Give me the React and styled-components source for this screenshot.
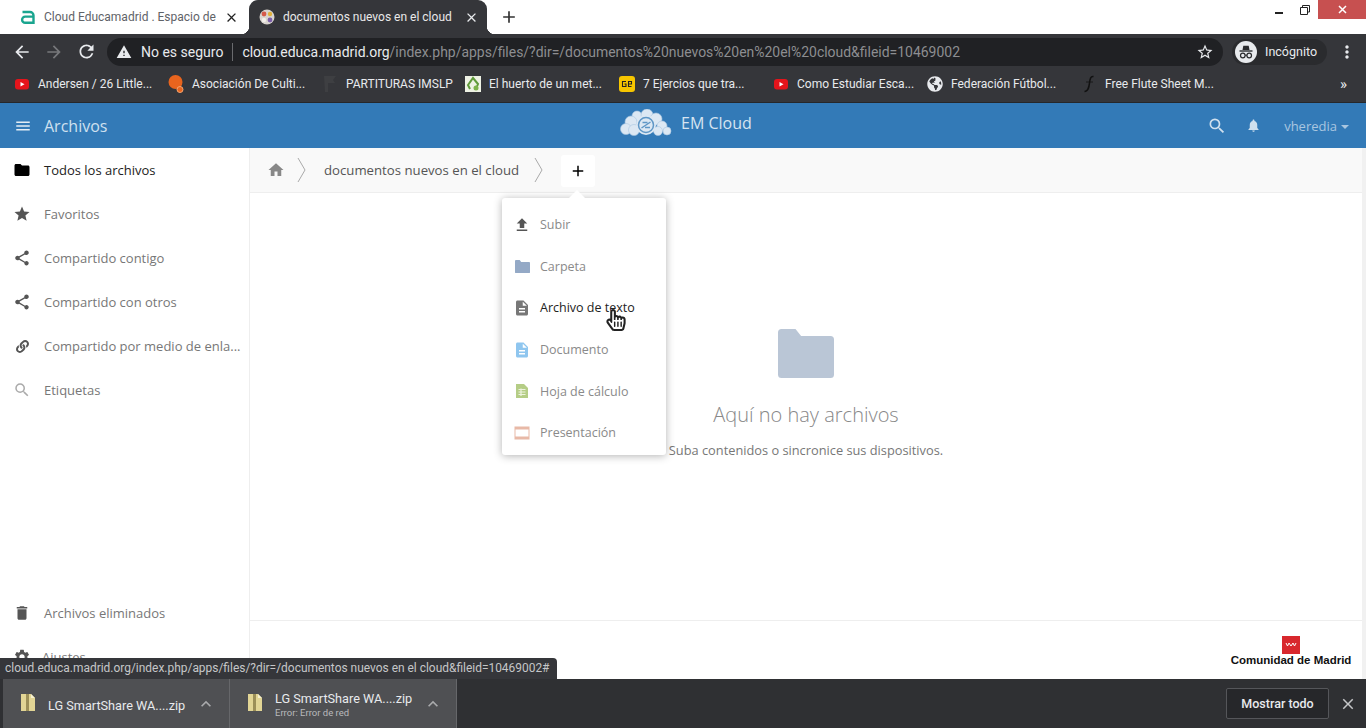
import React from "react";
import styled, { createGlobalStyle } from "styled-components";
import {
  MdMenu,
  MdFolder,
  MdStar,
  MdShare,
  MdSearch,
  MdDelete,
  MdSettings,
  MdHome,
  MdFileUpload,
  MdDescription,
  MdNotifications,
  MdArrowBack,
  MdArrowForward,
  MdRefresh,
  MdWarning,
  MdStarBorder,
  MdClose,
  MdAdd,
  MdExpandLess,
  MdMoreVert,
} from "react-icons/md";
import { FaGlobeAmericas, FaHandPointer, FaRegHandPointer, FaLink } from "react-icons/fa";

const Global = createGlobalStyle`
  html, body { margin: 0; padding: 0; background: #fff; overflow: hidden; }
  * { box-sizing: border-box; }
`;

const Page = styled.div`
  position: relative;
  width: 1366px;
  height: 728px;
  display: flex;
  flex-direction: column;
  overflow: hidden;
  font-family: "Open Sans", "Liberation Sans", sans-serif;
`;

/* browser chrome */
const TabStrip = styled.div`
  height: 34px;
  background: #fff;
  display: flex;
  align-items: stretch;
  font-family: Roboto, "Liberation Sans", sans-serif;
`;

const Tab = styled.div`
  position: relative;
  width: ${(p) => (p.$active ? "238px" : "249px")};
  padding: ${(p) => (p.$active ? "0 8px 0 10px" : "0 10px 0 20px")};
  display: flex;
  align-items: center;
  gap: 8px;
  font-size: 12px;
  border-radius: 9px 9px 0 0;
  background: ${(p) => (p.$active ? "#35363a" : "#fff")};
  color: ${(p) => (p.$active ? "#e8e8e8" : "#5f6368")};
  svg { flex: none; }
  ${(p) =>
    p.$active &&
    `
    &::before, &::after {
      content: "";
      position: absolute;
      bottom: 0;
      width: 8px;
      height: 8px;
    }
    &::before {
      left: -8px;
      background: radial-gradient(circle at 0 0, #fff 8px, #35363a 8.5px);
    }
    &::after {
      right: -8px;
      background: radial-gradient(circle at 100% 0, #fff 8px, #35363a 8.5px);
    }
  `}
`;

const TabTitle = styled.span`
  flex: 1;
  white-space: nowrap;
  overflow: hidden;
`;

const NewTab = styled.div`
  width: 44px;
  display: flex;
  align-items: center;
  justify-content: center;
  color: #333;
`;

const WindowControls = styled.div`
  margin-left: auto;
  display: flex;
  align-items: flex-start;
  color: #222;
`;

const WinButton = styled.div`
  width: ${(p) => (p.$close ? "48px" : "26px")};
  height: 19px;
  display: flex;
  align-items: center;
  justify-content: center;
  background: ${(p) => (p.$close ? "#c75050" : "transparent")};
  color: ${(p) => (p.$close ? "#fff" : "#222")};
`;

const Toolbar = styled.div`
  height: 35px;
  background: #35363a;
  display: flex;
  align-items: center;
  padding: 0 9px 0 6px;
  color: #e8eaed;
  font-family: Roboto, "Liberation Sans", sans-serif;
`;

const NavButton = styled.div`
  width: 32px;
  display: flex;
  justify-content: center;
  color: ${(p) => (p.$off ? "#77787b" : "#e8eaed")};
`;

const Omnibox = styled.div`
  width: 1116px;
  height: 28px;
  margin-left: 5px;
  border-radius: 14px;
  background: #202124;
  display: flex;
  align-items: center;
  padding: 0 9px 0 9px;
  font-size: 14px;
`;

const Security = styled.span`
  margin-left: 9px;
  padding-right: 9px;
  border-right: 1px solid #6a6b6e;
  line-height: 18px;
  white-space: nowrap;
`;

const Url = styled.span`
  margin-left: 9px;
  flex: 1;
  white-space: nowrap;
  font-size: 13.96px;
  color: #8d8e91;
  span { color: #e8eaed; }
`;

const Incognito = styled.div`
  width: 95px;
  height: 26px;
  margin-left: 9px;
  border-radius: 13px;
  background: #2a2b2e;
  display: flex;
  align-items: center;
  gap: 8px;
  padding-left: 3px;
  font-size: 12.5px;
`;

const MoreButton = styled.div`
  margin-left: auto;
  display: flex;
`;

const Bookmarks = styled.div`
  height: 34px;
  background: #35363a;
  border-bottom: 1px solid #26272a;
  display: flex;
  align-items: center;
  padding: 0 0 3px 14px;
  color: #e8eaed;
  font-size: 12px;
  font-family: Roboto, "Liberation Sans", sans-serif;
`;

const Bookmark = styled.div`
  width: ${(p) => p.$w}px;
  display: flex;
  align-items: center;
  gap: 8px;
  white-space: nowrap;
  svg { flex: none; }
`;

const Overflow = styled.div`
  margin-left: auto;
  padding-right: 19px;
  font-size: 15px;
`;

/* nextcloud header */
const AppHeader = styled.header`
  height: 45px;
  background: #337ab7;
  display: flex;
  align-items: center;
  padding: 0 17px 0 14px;
  color: #cfe0ef;
  position: relative;
`;

const AppName = styled.div`
  margin-left: 12px;
  font-size: 16px;
`;

const Brand = styled.div`
  position: absolute;
  left: 620px;
  top: 6px;
  display: flex;
  align-items: center;
  gap: 9px;
  font-size: 16px;
  color: #d6e4f1;
`;

const HeaderRight = styled.div`
  margin-left: auto;
  display: flex;
  align-items: center;
  font-size: 13px;
  color: #a9c6e0;
  svg:first-child { margin-right: 19px; }
  span { margin-left: 23px; }
`;

const Caret = styled.i`
  display: inline-block;
  margin-left: 4px;
  vertical-align: middle;
  border-left: 4px solid transparent;
  border-right: 4px solid transparent;
  border-top: 4px solid #a9c6e0;
`;

const Body = styled.div`
  flex: 1;
  min-height: 0;
  position: relative;
  display: flex;
`;

const Sidebar = styled.nav`
  width: 250px;
  flex: none;
  border-right: 1px solid #eee;
  display: flex;
  flex-direction: column;
  overflow: hidden;
`;

const NavIcon = styled.span`
  width: 18px;
  flex: none;
  display: flex;
  justify-content: center;
  color: ${(p) => (p.$active ? "#000" : p.$color || "#555")};
`;

const NavItem = styled.div`
  height: 44px;
  flex: none;
  display: flex;
  align-items: center;
  gap: ${(p) => p.$gap || 13}px;
  padding-left: 13px;
  font-size: 13px;
  white-space: nowrap;
  color: ${(p) => (p.$active ? "#222" : "#777")};
`;

const Spacer = styled.div`
  flex: 1;
`;

const Main = styled.main`
  flex: 1;
  min-width: 0;
  display: flex;
  flex-direction: column;
  border-right: 4px solid #f1f1f1;
`;

const Crumbs = styled.div`
  height: 45px;
  flex: none;
  background: #f9f9f9;
  border-bottom: 1px solid #eee;
  display: flex;
  align-items: center;
  padding-left: 17px;
  font-size: 13.2px;
  color: #555;
`;

const CrumbIcon = styled.div`
  display: flex;
  color: ${(p) => p.$color || "#777"};
  margin: ${(p) => p.$margin || "0"};
`;

const AddButton = styled.div`
  width: 34px;
  height: 32px;
  margin-left: 17px;
  margin-top: 2px;
  background: #fff;
  color: #000;
  display: flex;
  align-items: center;
  justify-content: center;
  border-radius: 3px;
`;

const Empty = styled.section`
  flex: 1;
  display: flex;
  flex-direction: column;
  align-items: center;
  padding-top: 136px;
`;

const EmptyTitle = styled.h2`
  margin: 23px 0 0;
  font-size: 20px;
  line-height: 27px;
  font-weight: 300;
  color: #888;
`;

const EmptyText = styled.p`
  margin: 13px 0 0;
  font-size: 12.8px;
  line-height: 18px;
  color: #777;
`;

const Footer = styled.footer`
  height: 59px;
  flex: none;
  border-top: 1px solid #eee;
  display: flex;
  flex-direction: column;
  align-items: flex-end;
  padding: 15px 11px 0 0;
`;

const Region = styled.div`
  position: relative;
  width: 120px;
  display: flex;
  flex-direction: column;
  align-items: center;
  font-family: "Liberation Sans", Arial, sans-serif;
  font-weight: 700;
  font-size: 11.5px;
  line-height: 13px;
  color: #111;
  white-space: nowrap;
`;

const Flag = styled.div`
  width: 18px;
  height: 18px;
  background: #d8272d;
  display: flex;
  align-items: center;
  justify-content: center;
`;

/* new file menu */
const Menu = styled.div`
  position: absolute;
  left: 502px;
  top: 50px;
  width: 164px;
  height: 257px;
  padding: 6px 0 0;
  background: #fff;
  border-radius: 3px;
  box-shadow: 0 1px 8px rgba(0, 0, 0, 0.3);
  &::before {
    content: "";
    position: absolute;
    left: 67px;
    top: -8px;
    width: 0;
    height: 0;
    border-left: 8px solid transparent;
    border-right: 8px solid transparent;
    border-bottom: 8px solid #fff;
  }
`;

const MenuItem = styled.div`
  height: 41.6px;
  display: flex;
  align-items: center;
  gap: 8px;
  padding-left: 10px;
  font-size: 12.5px;
  color: ${(p) => (p.$hover ? "#222" : "#8a8a8a")};
`;

const MenuIcon = styled.span`
  width: 20px;
  flex: none;
  display: flex;
  justify-content: center;
`;

const Cursor = styled.div`
  position: absolute;
  left: 605px;
  top: 161px;
  width: 19px;
  height: 22px;
  color: #fff;
  svg + svg {
    position: absolute;
    left: 0;
    top: 0;
    color: #222;
  }
`;

const StatusBubble = styled.div`
  position: absolute;
  left: 0;
  bottom: 0;
  width: 557px;
  height: 21px;
  padding-left: 5px;
  background: #35363a;
  border-top-right-radius: 4px;
  color: #c5c6c8;
  font-size: 11.95px;
  line-height: 21px;
  white-space: nowrap;
  font-family: Roboto, "Liberation Sans", sans-serif;
`;

/* download shelf */
const Shelf = styled.div`
  height: 49px;
  background: #2f3033;
  display: flex;
  align-items: stretch;
  padding-left: 3px;
  color: #e8eaed;
  font-family: Roboto, "Liberation Sans", sans-serif;
`;

const Download = styled.div`
  width: 227px;
  background: #4f5053;
  border-right: 1px solid #66676a;
  display: flex;
  align-items: center;
  padding: 3px 0 0 17px;
  gap: 12px;
  font-size: 12.7px;
  &:last-of-type {
    border-right: none;
    padding-left: 16px;
  }
`;

const FileIcon = styled.span`
  display: flex;
  margin-top: -6px;
`;

const FileMeta = styled.div`
  width: 136px;
  line-height: 15px;
  white-space: nowrap;
`;

const FileError = styled.div`
  font-size: 9.5px;
  line-height: 13px;
  color: #b9babc;
`;

const Chevron = styled.div`
  display: flex;
  margin-top: -3px;
  color: #a9aaac;
`;

const ShelfEnd = styled.div`
  margin-left: auto;
  display: flex;
  align-items: center;
  gap: 10px;
  padding-right: 9px;
`;

const ShowAll = styled.div`
  width: 103px;
  height: 31px;
  border: 1px solid #55565a;
  border-radius: 2px;
  background: #26272a;
  display: flex;
  align-items: center;
  justify-content: center;
  padding-bottom: 1px;
  font-size: 12.5px;
  font-weight: 500;
`;

const ShelfClose = styled.div`
  display: flex;
  color: #c5c6c8;
`;

const Yt = () => (
  <svg width="16" height="16" viewBox="0 0 16 16">
    <rect x="1" y="3" width="14" height="10.5" rx="3" fill="#e5141b" />
    <path d="M6.500 6 10.500 8.200 6.500 10.400Z" fill="#fff" />
  </svg>
);

const OrangeDot = () => (
  <svg width="16" height="20" viewBox="0 0 16 20">
    <circle cx="7.500" cy="8" r="7" fill="#e8641e" />
    <circle cx="12" cy="15.500" r="3" fill="#e8641e" stroke="#f5a46e" />
  </svg>
);

const DarkFlag = () => (
  <svg width="16" height="18" viewBox="0 0 16 18">
    <path d="M2 1h12l-3 4 2 3H6v9H3z" fill="#3e3f42" />
  </svg>
);

const MapMark = () => (
  <svg width="16" height="16" viewBox="0 0 16 16">
    <rect width="16" height="16" fill="#eef2e4" />
    <path d="M5 13 3 9l5-7 5 6-2 5" fill="none" stroke="#5f9a3a" strokeWidth="2" />
    <circle cx="11" cy="12" r="2.500" fill="#7cb24a" />
  </svg>
);

const GeMark = () => (
  <svg width="16" height="16" viewBox="0 0 16 16">
    <rect width="16" height="16" rx="3" fill="#f7c600" />
    <path d="M7 5.500H3.500v5H7V8H5.500M12.500 10.500H9.500v-5h3V8h-3" fill="none" stroke="#222" strokeWidth="1.100" />
  </svg>
);

const FluteMark = () => (
  <svg width="16" height="18" viewBox="0 0 16 18">
    <path d="M12.500 1.500C9.500 1 9 4 8.500 8S7.500 16.500 3.500 16.500" fill="none" stroke="#111" strokeWidth="1.500" />
    <path d="M5 7h7" stroke="#111" strokeWidth="0.800" />
  </svg>
);

const EducaLogo = () => (
  <svg width="16" height="16" viewBox="0 0 16 16">
    <path d="M2.500 3h7.500a3.500 3.500 0 0 1 3.500 3.500V13.800H5.200a3.100 3.100 0 0 1 0-6.200h8" fill="none" stroke="#1aa58f" strokeWidth="2.400" />
  </svg>
);

const TabFavicon = () => (
  <svg width="16" height="16" viewBox="0 0 16 16">
    <circle cx="8" cy="8" r="7.500" fill="#d9d4cf" />
    <circle cx="5" cy="5" r="2.400" fill="#d5594a" />
    <circle cx="11" cy="5" r="2.200" fill="#e0b13c" />
    <circle cx="11" cy="11" r="2.400" fill="#7b5fa8" />
    <circle cx="5" cy="11" r="2.200" fill="#f2efe9" />
  </svg>
);

const IncognitoIcon = () => (
  <svg width="22" height="22" viewBox="0 0 22 22">
    <circle cx="11" cy="11" r="11" fill="#e8eaed" />
    <path d="M7.500 9 8.300 4.800h5.400L14.500 9z" fill="#2a2b2e" />
    <path d="M4.500 10h13" stroke="#2a2b2e" strokeWidth="1.400" />
    <circle cx="7.800" cy="14.500" r="2.300" fill="none" stroke="#2a2b2e" strokeWidth="1.200" />
    <circle cx="14.200" cy="14.500" r="2.300" fill="none" stroke="#2a2b2e" strokeWidth="1.200" />
    <path d="M10 14.200h2" stroke="#2a2b2e" />
  </svg>
);

const CloudLogo = () => (
  <svg width="52" height="28" viewBox="0 0 52 28">
    <g fill="#dce8f3" stroke="#a9c6e0" strokeWidth="0.600">
      <circle cx="17" cy="7" r="5" />
      <circle cx="27" cy="6" r="6" />
      <circle cx="36" cy="10" r="6" />
      <circle cx="11" cy="13" r="6" />
      <circle cx="6" cy="20" r="5.500" />
      <circle cx="42" cy="17" r="5" />
      <circle cx="47" cy="22" r="4" />
      <circle cx="14" cy="21" r="5.500" />
      <circle cx="38" cy="22" r="4.500" />
    </g>
    <circle cx="26" cy="16" r="10" fill="#dce8f3" />
    <circle cx="26" cy="16" r="7.500" fill="none" stroke="#5f97c6" strokeWidth="1.500" />
    <path d="M21.500 19 30.500 13M22.500 13.500h5M25 18.500h5" stroke="#5f97c6" strokeWidth="1.500" />
  </svg>
);

const PlainFolder = ({ size, color }) => (
  <svg width={size} height={size * 0.875} viewBox="0 0 16 14">
    <path d="M0 1a1 1 0 0 1 1-1h4l1.600 2H15a1 1 0 0 1 1 1v10a1 1 0 0 1-1 1H1a1 1 0 0 1-1-1z" fill={color} />
  </svg>
);

const Sheet = () => (
  <svg width="14" height="16" viewBox="0 0 14 16">
    <path d="M1 1h8l4 4v10H1z" fill="#b5cd86" />
    <path d="M3.500 6.500h7M3.500 9h7M3.500 11.500h7M6 5.500v7.500" stroke="#eef3df" strokeWidth="1.200" />
  </svg>
);

const Slides = () => (
  <svg width="16" height="14" viewBox="0 0 16 14">
    <rect x="0.500" y="0.500" width="15" height="13" fill="#e8b9a7" />
    <rect x="1.500" y="3.500" width="13" height="7" fill="#fff" />
  </svg>
);

const Grill = () => (
  <svg width="12" height="6" viewBox="0 0 12 6">
    <path d="M1 1l1.500 3L4 1l2 3 2-3 1.500 3L11 1" fill="none" stroke="#fff" strokeWidth="1" />
  </svg>
);

const ZipFile = () => (
  <svg width="16" height="17" viewBox="0 0 16 17">
    <path d="M1 0h10l4 4v13H1z" fill="#e2d595" />
    <path d="M6 0h3v17H6z" fill="#9c8f58" />
    <path d="M11 0l4 4h-4z" fill="#f7f1cf" />
  </svg>
);

const Chevrons = () => (
  <svg width="10" height="30" viewBox="0 0 10 30">
    <path d="M1 3l7 12-7 12" fill="none" stroke="#aaa" />
  </svg>
);

const navItems = [
  { label: "Todos los archivos", icon: <MdFolder size={18} />, active: true },
  { label: "Favoritos", icon: <MdStar size={18} /> },
  { label: "Compartido contigo", icon: <MdShare size={18} /> },
  { label: "Compartido con otros", icon: <MdShare size={18} /> },
  { label: "Compartido por medio de enla...", icon: <FaLink size={13} /> },
  { label: "Etiquetas", icon: <MdSearch size={18} />, color: "#aaa" },
];

const bookmarks = [
  { w: 154, icon: <Yt />, label: "Andersen / 26 Little..." },
  { w: 154, icon: <OrangeDot />, label: "Asociación De Culti..." },
  { w: 143, icon: <DarkFlag />, label: "PARTITURAS IMSLP" },
  { w: 154, icon: <MapMark />, label: "El huerto de un met..." },
  { w: 154, icon: <GeMark />, label: "7 Ejercios que tra..." },
  { w: 154, icon: <Yt />, label: "Como Estudiar Esca..." },
  { w: 154, icon: <FaGlobeAmericas size={16} color="#e8eaed" />, label: "Federación Fútbol..." },
  { w: 140, icon: <FluteMark />, label: "Free Flute Sheet M..." },
];

export default function App() {
  return (
    <Page>
      <Global />
      <TabStrip>
        <Tab>
          <EducaLogo />
          <TabTitle>Cloud Educamadrid . Espacio de</TabTitle>
          <MdClose size={15} color="#222" />
        </Tab>
        <Tab $active>
          <TabFavicon />
          <TabTitle>documentos nuevos en el cloud</TabTitle>
          <MdClose size={15} color="#e8eaed" />
        </Tab>
        <NewTab>
          <MdAdd size={20} />
        </NewTab>
        <WindowControls>
          <WinButton>
            <svg width="10" height="10" viewBox="0 0 10 10">
              <path d="M1 8h8" stroke="#222" strokeWidth="2" />
            </svg>
          </WinButton>
          <WinButton>
            <svg width="10" height="10" viewBox="0 0 10 10">
              <path d="M2.500 2.500V.5h7v6.500H7.500M.5 2.500h7v7h-7z" fill="none" stroke="#222" />
            </svg>
          </WinButton>
          <WinButton $close>
            <svg width="9" height="9" viewBox="0 0 9 9">
              <path d="M1 1l7 7M8 1 1 8" stroke="#fff" strokeWidth="1.500" />
            </svg>
          </WinButton>
        </WindowControls>
      </TabStrip>

      <Toolbar>
        <NavButton>
          <MdArrowBack size={20} />
        </NavButton>
        <NavButton $off>
          <MdArrowForward size={20} />
        </NavButton>
        <NavButton>
          <MdRefresh size={21} />
        </NavButton>
        <Omnibox>
          <MdWarning size={16} color="#e8eaed" />
          <Security>No es seguro</Security>
          <Url>
            <span>cloud.educa.madrid.org</span>
            /index.php/apps/files/?dir=/documentos%20nuevos%20en%20el%20cloud&amp;fileid=10469002
          </Url>
          <MdStarBorder size={18} color="#e8eaed" />
        </Omnibox>
        <Incognito>
          <IncognitoIcon />
          Incógnito
        </Incognito>
        <MoreButton>
          <MdMoreVert size={20} />
        </MoreButton>
      </Toolbar>

      <Bookmarks>
        {bookmarks.map((b) => (
          <Bookmark key={b.label} $w={b.w}>
            {b.icon}
            {b.label}
          </Bookmark>
        ))}
        <Overflow>»</Overflow>
      </Bookmarks>

      <AppHeader>
        <MdMenu size={18} color="#e4edf5" />
        <AppName>Archivos</AppName>
        <Brand>
          <CloudLogo />
          EM Cloud
        </Brand>
        <HeaderRight>
          <MdSearch size={20} color="#d0e0ee" />
          <MdNotifications size={15} color="#d0e0ee" />
          <span>
            vheredia
            <Caret />
          </span>
        </HeaderRight>
      </AppHeader>

      <Body>
        <Sidebar>
          {navItems.map(({ label, icon, active, color }) => (
            <NavItem key={label} $active={active}>
              <NavIcon $active={active} $color={color}>
                {icon}
              </NavIcon>
              {label}
            </NavItem>
          ))}
          <Spacer />
          <NavItem>
            <NavIcon>
              <MdDelete size={18} />
            </NavIcon>
            Archivos eliminados
          </NavItem>
          <NavItem $gap={11}>
            <NavIcon>
              <MdSettings size={20} />
            </NavIcon>
            Ajustes
          </NavItem>
        </Sidebar>

        <Main>
          <Crumbs>
            <CrumbIcon $color="#888">
              <MdHome size={18} />
            </CrumbIcon>
            <CrumbIcon $margin="0 17px 0 12px">
              <Chevrons />
            </CrumbIcon>
            documentos nuevos en el cloud
            <CrumbIcon $margin="0 0 0 15px">
              <Chevrons />
            </CrumbIcon>
            <AddButton>
              <MdAdd size={18} />
            </AddButton>
          </Crumbs>
          <Empty>
            <PlainFolder size={56} color="#bac6d6" />
            <EmptyTitle>Aquí no hay archivos</EmptyTitle>
            <EmptyText>Suba contenidos o sincronice sus dispositivos.</EmptyText>
          </Empty>
          <Footer>
            <Region>
              <Flag>
                <Grill />
              </Flag>
              Comunidad de Madrid
            </Region>
          </Footer>
        </Main>

        <Menu>
          <MenuItem>
            <MenuIcon>
              <MdFileUpload size={18} color="#555" />
            </MenuIcon>
            Subir
          </MenuItem>
          <MenuItem>
            <MenuIcon>
              <PlainFolder size={15} color="#94a9c6" />
            </MenuIcon>
            Carpeta
          </MenuItem>
          <MenuItem $hover>
            <MenuIcon>
              <MdDescription size={18} color="#777" />
            </MenuIcon>
            Archivo de texto
          </MenuItem>
          <MenuItem>
            <MenuIcon>
              <MdDescription size={18} color="#8fc6ef" />
            </MenuIcon>
            Documento
          </MenuItem>
          <MenuItem>
            <MenuIcon>
              <Sheet />
            </MenuIcon>
            Hoja de cálculo
          </MenuItem>
          <MenuItem>
            <MenuIcon>
              <Slides />
            </MenuIcon>
            Presentación
          </MenuItem>
        </Menu>

        <Cursor>
          <FaHandPointer size={22} />
          <FaRegHandPointer size={22} />
        </Cursor>

        <StatusBubble>
          cloud.educa.madrid.org/index.php/apps/files/?dir=/documentos nuevos en el cloud&amp;fileid=10469002#
        </StatusBubble>
      </Body>

      <Shelf>
        <Download>
          <FileIcon>
            <ZipFile />
          </FileIcon>
          <FileMeta>LG SmartShare WA....zip</FileMeta>
          <Chevron>
            <MdExpandLess size={20} />
          </Chevron>
        </Download>
        <Download>
          <FileIcon>
            <ZipFile />
          </FileIcon>
          <FileMeta>
            LG SmartShare WA....zip
            <FileError>Error: Error de red</FileError>
          </FileMeta>
          <Chevron>
            <MdExpandLess size={20} />
          </Chevron>
        </Download>
        <ShelfEnd>
          <ShowAll>Mostrar todo</ShowAll>
          <ShelfClose>
            <MdClose size={18} />
          </ShelfClose>
        </ShelfEnd>
      </Shelf>
    </Page>
  );
}
